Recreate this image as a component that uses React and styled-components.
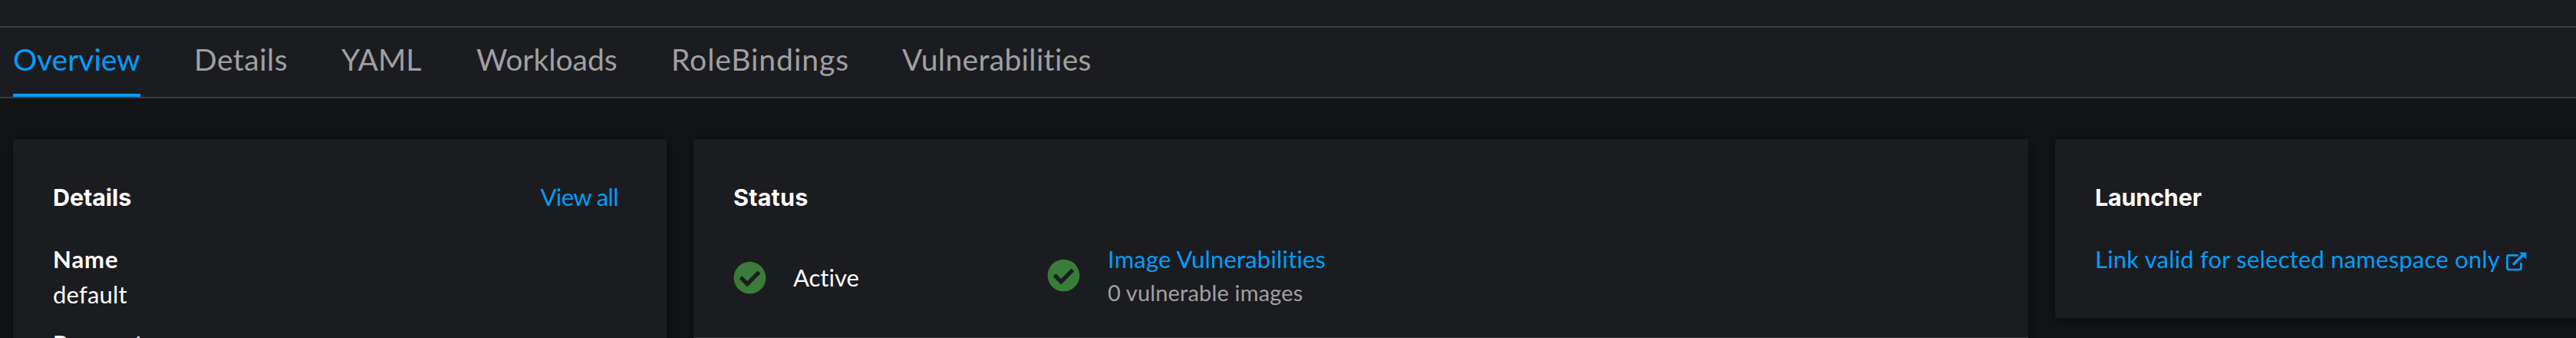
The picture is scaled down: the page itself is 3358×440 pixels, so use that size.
import React from "react";
import styled, { createGlobalStyle } from "styled-components";

const color = {
  page: "#121416",
  surface: "#1b1c20",
  line: "#3d3e41",
  text: "#ffffff",
  muted: "#a0a0a1",
  link: "#009efb",
  success: "#397d38",
};

const GlobalStyle = createGlobalStyle`
  * { box-sizing: border-box; }
  body {
    margin: 0;
    background: ${color.page};
    color: ${color.text};
    font-family: Lato, "Open Sans", sans-serif;
    font-size: 31px;
    line-height: 46px;
    font-variant-ligatures: none;
  }
`;

const Page = styled.div`
  height: 440px;
  overflow: hidden;
  background: ${color.page};
`;

const TopStrip = styled.div`
  height: 34px;
  background: ${color.surface};
`;

const TabBar = styled.nav`
  display: flex;
  gap: 70px;
  height: 94px;
  padding-left: 17px;
  background: ${color.surface};
  border-top: 2px solid ${color.line};
  border-bottom: 2px solid ${color.line};
`;

const Tab = styled.a`
  flex: none;
  width: ${(p) => p.$width}px;
  height: 90px;
  font-size: 39px;
  line-height: 82px;
  letter-spacing: ${(p) => p.$tracking}px;
  white-space: nowrap;
  color: ${(p) => (p.$active ? color.link : color.muted)};
  border-bottom: 4px solid ${(p) => (p.$active ? color.link : "transparent")};
`;

const Dashboard = styled.main`
  display: grid;
  grid-template-columns: 852px 1740px 852px;
  column-gap: 35px;
  align-items: start;
  padding: 53px 0 0 17px;
`;

const Card = styled.section`
  height: ${(p) => p.$height || 400}px;
  background: ${color.surface};
  box-shadow: 0 4px 16px rgba(0, 0, 0, 0.32), 0 0 8px rgba(0, 0, 0, 0.2);
`;

const CardHeader = styled.header`
  display: flex;
  justify-content: space-between;
  align-items: center;
  height: 102px;
  padding: 48px 63px 0 52px;
`;

const CardTitle = styled.h2`
  margin: 0;
  padding-top: 2px;
  font-family: Inter, sans-serif;
  font-size: 30.5px;
  font-weight: 700;
  letter-spacing: ${(p) => p.$tracking}px;
`;

const Link = styled.a`
  display: inline-flex;
  align-items: center;
  color: ${color.link};
  letter-spacing: ${(p) => p.$tracking || 0}px;
  white-space: nowrap;
`;

const CardBody = styled.div`
  padding: 31px 52px 0;
`;

const DetailList = styled.dl`
  display: grid;
  row-gap: 18px;
  margin: 0;
`;

const Term = styled.dt`
  font-weight: 700;
  letter-spacing: 0.9px;
`;

const Value = styled.dd`
  margin: 0;
  letter-spacing: 0.2px;
`;

const HealthBody = styled.div`
  display: grid;
  grid-template-columns: 409px 1fr;
  height: 156px;
  padding: 31px 52px 0;
`;

const HealthItem = styled.div`
  display: flex;
  align-items: center;
  gap: ${(p) => p.$gap}px;
  height: ${(p) => p.$height}px;
`;

const HealthText = styled.div`
  display: flex;
  flex-direction: column;
`;

const Caption = styled.span`
  font-size: 29px;
  line-height: 42px;
  letter-spacing: 0.15px;
  color: ${color.muted};
`;

const Divider = styled.hr`
  height: 2px;
  margin: 0;
  border: 0;
  background: ${color.line};
`;

const StatusIcon = styled.svg`
  flex: none;
  width: 43px;
  height: 43px;
  fill: ${color.success};
`;

const ExternalIcon = styled.svg`
  width: 28px;
  height: 28px;
  margin: 7px 0 0 7px;
  fill: currentColor;
`;

function CheckCircle() {
  return (
    <StatusIcon viewBox="0 0 512 512" aria-hidden="true">
      <path d="M504 256c0 136.967-111.033 248-248 248S8 392.967 8 256 119.033 8 256 8s248 111.033 248 248zM227.314 387.314l184-184c6.248-6.248 6.248-16.379 0-22.627l-22.627-22.627c-6.248-6.249-16.379-6.249-22.628 0L216 308.118l-70.059-70.059c-6.248-6.248-16.379-6.248-22.628 0l-22.627 22.627c-6.248 6.248-6.248 16.379 0 22.627l104 104c6.249 6.249 16.379 6.249 22.628.001z" />
    </StatusIcon>
  );
}

function ExternalLink() {
  return (
    <ExternalIcon viewBox="0 0 28 28" aria-hidden="true">
      <path
        d="M16.5 5.3H4.3Q2.3 5.3 2.3 7.3V22Q2.3 24 4.3 24H18.3Q20.3 24 20.3 22V15"
        fill="none"
        stroke="currentColor"
        strokeWidth="2.7"
      />
      <path d="M11 16.5L23 4.5" stroke="currentColor" strokeWidth="3.4" strokeLinecap="round" />
      <path d="M18 1.5H27.2V10.7Z" />
    </ExternalIcon>
  );
}

const tabs = [
  { label: "Overview", width: 166, tracking: -0.05 },
  { label: "Details", width: 122, tracking: 0.5 },
  { label: "YAML", width: 106, tracking: 0 },
  { label: "Workloads", width: 184, tracking: 0 },
  { label: "RoleBindings", width: 231, tracking: 0.95 },
  { label: "Vulnerabilities", width: 246, tracking: 0.35 },
];

export default function App() {
  return (
    <Page>
      <GlobalStyle />
      <TopStrip />
      <TabBar>
        {tabs.map((tab, index) => (
          <Tab key={tab.label} $active={index === 0} $width={tab.width} $tracking={tab.tracking}>
            {tab.label}
          </Tab>
        ))}
      </TabBar>
      <Dashboard>
        <Card>
          <CardHeader>
            <CardTitle $tracking={-0.1}>Details</CardTitle>
            <Link $tracking={-0.6}>View all</Link>
          </CardHeader>
          <CardBody>
            <DetailList>
              <div>
                <Term>Name</Term>
                <Value>default</Value>
              </div>
              <div>
                <Term>Requester</Term>
              </div>
            </DetailList>
          </CardBody>
        </Card>
        <Card>
          <CardHeader>
            <CardTitle $tracking={0.2}>Status</CardTitle>
          </CardHeader>
          <HealthBody>
            <HealthItem $gap={35} $height={94}>
              <CheckCircle />
              <span>Active</span>
            </HealthItem>
            <HealthItem $gap={36} $height={88}>
              <CheckCircle />
              <HealthText>
                <Link $tracking={0.18}>Image Vulnerabilities</Link>
                <Caption>0 vulnerable images</Caption>
              </HealthText>
            </HealthItem>
          </HealthBody>
          <Divider />
        </Card>
        <Card $height={233}>
          <CardHeader>
            <CardTitle $tracking={-0.2}>Launcher</CardTitle>
          </CardHeader>
          <CardBody>
            <Link $tracking={0.21}>
              Link valid for selected namespace only
              <ExternalLink />
            </Link>
          </CardBody>
        </Card>
      </Dashboard>
    </Page>
  );
}
